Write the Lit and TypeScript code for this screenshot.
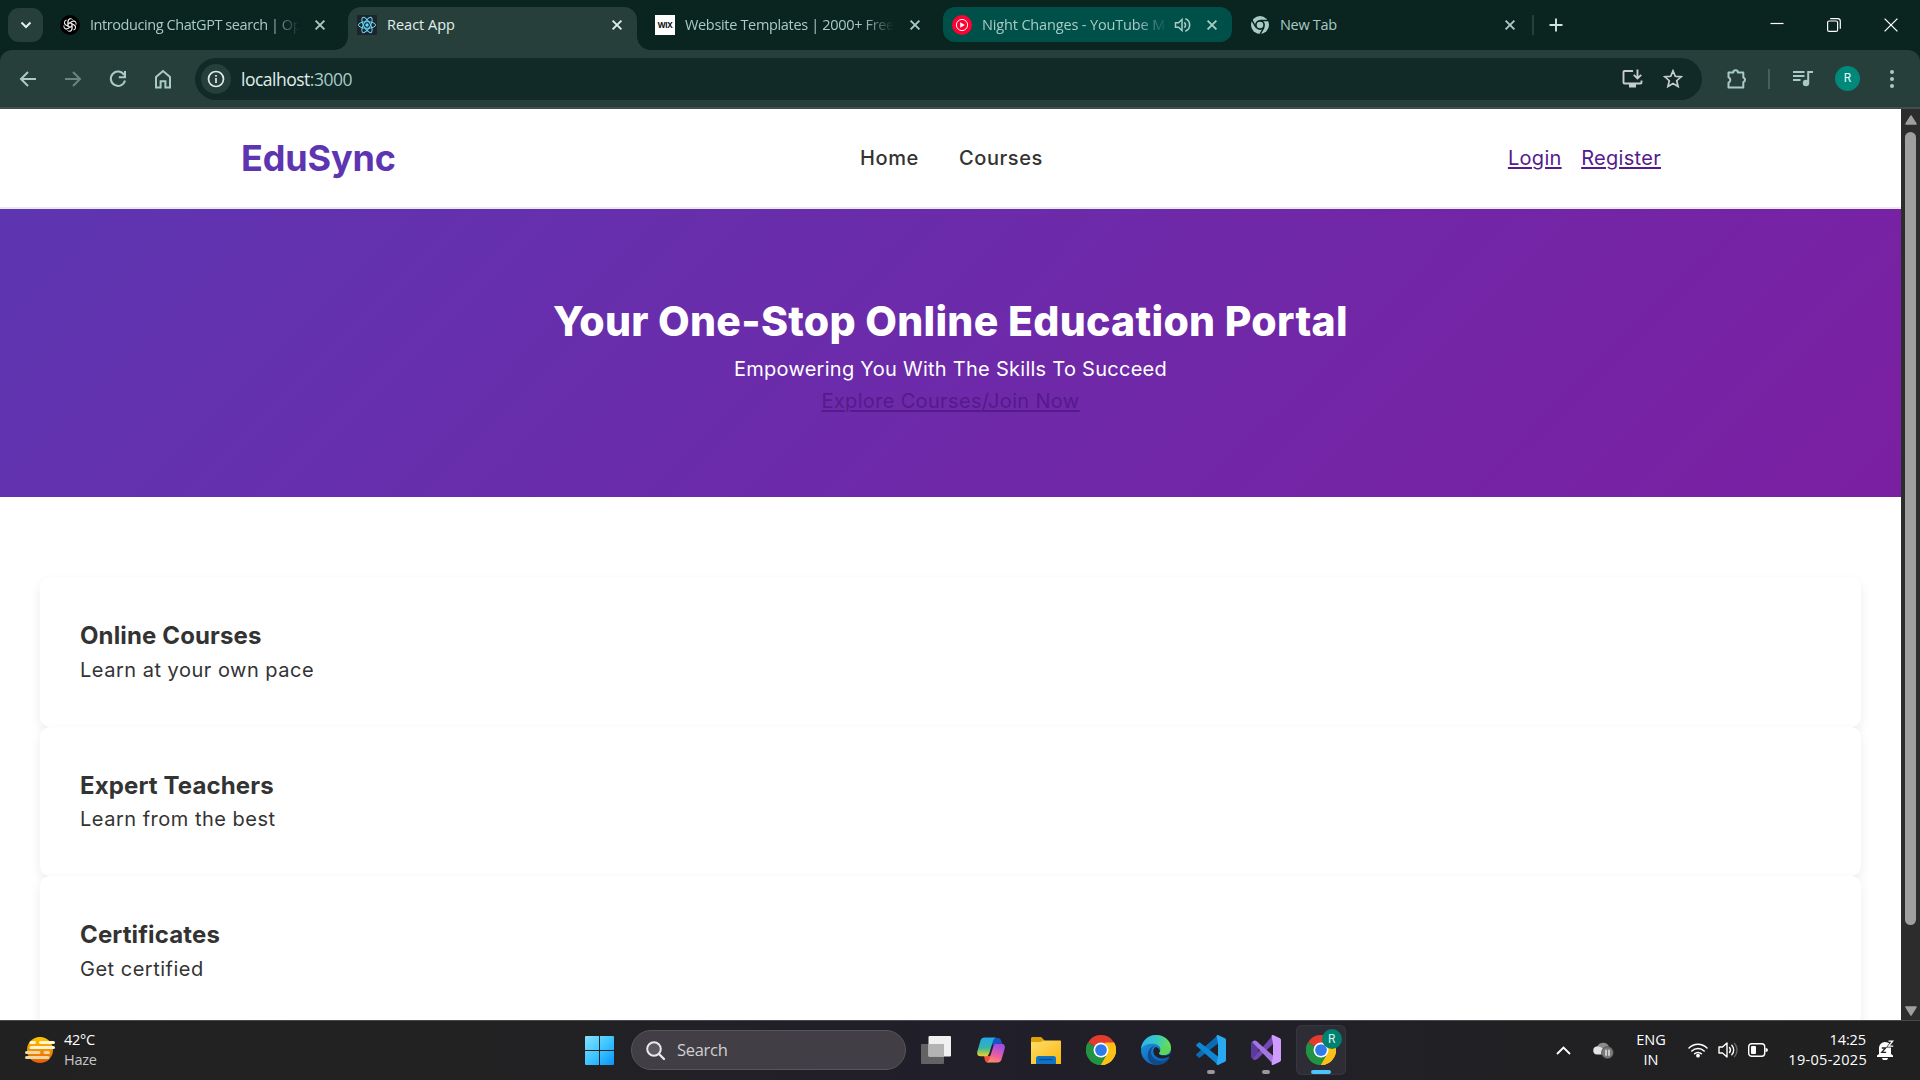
import { LitElement, html, svg, css } from "lit";
import { customElement } from "lit/decorators.js";

const icon = (w: number, h: number, body: unknown, vb = `0 0 ${w} ${h}`) =>
  html`<svg class="icon" width=${w} height=${h} viewBox=${vb} fill="none">${body}</svg>`;

const closeX = icon(12, 12, svg`<path d="M1.6 1.6l8.8 8.8M10.4 1.6l-8.8 8.8" stroke="currentColor" stroke-width="1.9"/>`);

const openai = icon(20, 20, svg`<circle cx="10" cy="10" r="10" fill="#000"/>
  <g stroke="#e8e8e8" stroke-width=".95" stroke-linejoin="round">
  ${[0, 60, 120, 180, 240, 300].map((a) => svg`<path transform="rotate(${a} 10 10)" d="M8 11.2V6.2a2.6 2.6 0 0 1 4.6-1.6M8.1 8.8l4.2-2.4a2.6 2.6 0 0 1 3.3.7"/>`)}
  </g>`);

const react = icon(20, 20, svg`<rect width="20" height="20" rx="1" fill="#20232a"/>
  <g stroke="#61dafb" stroke-width="1"><ellipse cx="10" cy="10" rx="8.6" ry="3.3"/>
  <ellipse cx="10" cy="10" rx="8.6" ry="3.3" transform="rotate(60 10 10)"/>
  <ellipse cx="10" cy="10" rx="8.6" ry="3.3" transform="rotate(120 10 10)"/></g><circle cx="10" cy="10" r="1.7" fill="#61dafb"/>`);

const ytMusic = icon(20, 20, svg`<circle cx="10" cy="10" r="10" fill="#ff0033"/><circle cx="10" cy="10" r="5.6" stroke="#fff" stroke-width="1"/>
  <path d="M8.2 7.2v5.6l4.6-2.8z" fill="#fff"/>`);

const chromeMono = icon(18, 18, svg`<circle cx="9" cy="9" r="9" fill="#a9cac5"/><circle cx="9" cy="9" r="4.9" fill="#0a2420"/>
  <circle cx="9" cy="9" r="3.3" fill="#a9cac5"/>
  <path d="M9 4.4h8.4M5 11.3L.9 4.2M13 11.3l-4 7" stroke="#0a2420" stroke-width="1.5"/>`);

const chrome = (s: number) => icon(s, s, svg`
  <path d="M24 24L3.2 12A24 24 0 0 1 44.8 12z" fill="#e33b2e"/>
  <path d="M24 24L44.8 12A24 24 0 0 1 24 48z" fill="#fbc116"/>
  <path d="M24 24V48A24 24 0 0 1 3.2 12z" fill="#229342"/>
  <path d="M24 12h20.8l-3 8H24z" fill="#e33b2e"/>
  <path d="M24 12h20.800a24 24 0 0 1 .9 2L34 20z" fill="#e33b2e"/>
  <path d="M44.800 12H30l6 12-2 6-10 18A24 24 0 0 0 44.800 12z" fill="#fbc116"/>
  <path d="M13.600 30L3.200 12a24 24 0 0 0 20.800 36l9-15.500-9 3.500z" fill="#229342"/>
  <path d="M24 48l10.400-18 3 4-6 13z" fill="#fbc116"/>
  <circle cx="24" cy="24" r="12" fill="#fff"/><circle cx="24" cy="24" r="9.4" fill="#2f7bea"/>`, "0 0 48 48");

const speakerTab = icon(17, 16, svg`<path d="M1.5 5.8h3L8 2.5v11L4.500 10.200h-3z" stroke="currentColor" stroke-width="1.5"/>
  <path d="M10.300 5.300a3.600 3.600 0 0 1 0 5.400M11.300 1.800a6.600 6.600 0 0 1 0 12.400" stroke="currentColor" stroke-width="1.600"/>`);

@customElement("browser-tabs")
class BrowserTabs extends LitElement {
  static styles = css`
    :host { display: block; height: 50px; background: #0a2420; color: #a9cac5; font: 14.5px "Open Sans", sans-serif; }
    .strip { display: flex; height: 50px; padding-left: 8px; box-sizing: border-box; }
    .icon { display: block; flex: none; }
    .down { width: 35px; height: 34px; margin-top: 8px; border-radius: 11px; background: #273f3b; display: grid; place-items: center; color: #e2efed; }
    .tab { height: 35px; margin-top: 7px; box-sizing: border-box; display: flex; align-items: center; padding-left: 9px; border-radius: 12px; }
    .title { flex: none; margin-left: 10px; white-space: nowrap; letter-spacing: -0.42px; line-height: 26px; }
    .fade { mask-image: linear-gradient(to right, #000 calc(100% - 30px), transparent); }
    .t1 { width: 289px; margin-left: 8px; }
    .t1 .title { width: 210px; margin-right: 14px; letter-spacing: -0.43px; }
    .t2 { width: 289px; margin-left: 8px; height: 43px; padding-bottom: 8px; background: #273f3b; color: #e0efec; border-radius: 13px 13px 0 0; position: relative; }
    .t2::before, .t2::after { content: ""; position: absolute; bottom: 0; width: 13px; height: 13px; }
    .t2::before { left: -13px; background: radial-gradient(circle at 0 0, #0a2420 12.5px, #273f3b 13px); }
    .t2::after { right: -13px; background: radial-gradient(circle at 100% 0, #0a2420 12.5px, #273f3b 13px); }
    .t2 .title { width: 216px; margin-left: 10px; margin-right: 8px; letter-spacing: 0; }
    .t3 { width: 289px; margin-left: 9px; }
    .t3 .title { width: 209px; margin-right: 15px; letter-spacing: -0.33px; }
    .wix { width: 20px; height: 20px; background: #fff; color: #111; font: bold 8px/20px "Inter", sans-serif; letter-spacing: -0.5px; text-align: center; }
    .t4 { width: 289px; margin-left: 8px; background: #00504a; }
    .t4 .title { width: 185px; margin-right: 7px; letter-spacing: -0.15px; }
    .t4 .last { margin-left: 15px; }
    .t5 { width: 289px; margin-left: 10px; }
    .t5 .title { width: 214px; margin-left: 11px; margin-right: 10px; letter-spacing: -0.3px; }
    .sep { width: 2px; height: 20px; background: #273f3b; margin: 15px 0 0 1px; }
    .plus { margin: 18px 0 0 15px; }
    .win { display: flex; align-items: center; height: 50px; margin-left: auto; margin-right: 22px; gap: 43px; color: #fff; }
  `;
  render() {
    return html`<div class="strip">
      <div class="down">${icon(12, 8, svg`<path d="M1.500 1.500L6 6l4.500-4.500" stroke="currentColor" stroke-width="2"/>`)}</div>
      <div class="tab t1">${openai}<span class="title fade">Introducing ChatGPT search | Op</span>${closeX}</div>
      <div class="tab t2">${react}<span class="title">React App</span>${closeX}</div>
      <div class="tab t3"><span class="wix">WIX</span><span class="title fade">Website Templates | 2000+ Free</span>${closeX}</div>
      <div class="tab t4">${ytMusic}<span class="title fade">Night Changes - YouTube M</span>${speakerTab}<span class="last">${closeX}</span></div>
      <div class="tab t5">${chromeMono}<span class="title">New Tab</span>${closeX}</div>
      <div class="sep"></div>
      <div class="plus">${icon(14, 14, svg`<path d="M7 .5v13M.5 7h13" stroke="#cfe3df" stroke-width="1.900"/>`)}</div>
      <div class="win">
        ${icon(14, 14, svg`<path d="M.5 5.500h13" stroke="currentColor" stroke-width="1.200"/>`)}
        ${icon(14, 14, svg`<rect x=".6" y="3" width="10" height="10.400" rx="1.500" stroke="currentColor" stroke-width="1.200"/><path d="M3.200.7h7.500a2.600 2.600 0 0 1 2.600 2.600v7.500" stroke="currentColor" stroke-width="1.200"/>`)}
        ${icon(14, 14, svg`<path d="M.6.6l12.800 12.800M13.400.6L.6 13.400" stroke="currentColor" stroke-width="1.300"/>`)}
      </div>
    </div>`;
  }
}

@customElement("browser-toolbar")
class BrowserToolbar extends LitElement {
  static styles = css`
    :host { display: block; height: 59px; background: #0a2420; }
    .bar { height: 59px; box-sizing: border-box; background: #273f3b; border-radius: 12px 12px 0 0; border-bottom: 2px solid #434d4e; display: flex; align-items: center; padding: 0 19px; color: #a9cac5; }
    .icon { display: block; flex: none; }
    .nav { display: flex; gap: 27px; align-items: center; width: 176px; flex: none; }
    .dim { opacity: 0.5; display: flex; }
    .omni { width: 1507px; height: 42px; box-sizing: border-box; flex: none; border-radius: 21px; background: #112927; display: flex; align-items: center; padding: 0 20px 0 6px; }
    .info { width: 30px; height: 30px; border-radius: 50%; background: #273f3b; display: grid; place-items: center; color: #dceae7; }
    .url { margin-left: 10px; font: 17.500px/24px "Open Sans", sans-serif; letter-spacing: -0.5px; color: #e0efec; flex: 1; }
    .port { color: #a9cac5; }
    .omni-icons { display: flex; gap: 20px; align-items: center; color: #c7cdcc; }
    .omni-icons .icon + .icon { margin-right: -1px; }
    .right { display: flex; align-items: center; flex: none; }
    .ext { margin-left: 24px; }
    .sep { width: 2px; height: 20px; background: #45605b; margin-left: 20px; }
    .music { margin-left: 23px; }
    .avatar { width: 25px; height: 25px; margin-left: 22px; border-radius: 50%; background: #00897b; color: #e6fffb; font: 12px/25px "Roboto", sans-serif; text-align: center; }
    .dots { margin-left: 30px; }
  `;
  render() {
    return html`<div class="bar">
      <div class="nav">
        ${icon(18, 18, svg`<path d="M17 9H2.500M9 2L2 9l7 7" stroke="currentColor" stroke-width="2"/>`)}
        <span class="dim">${icon(18, 18, svg`<path d="M1 9h14.500M9 2l7 7-7 7" stroke="currentColor" stroke-width="2"/>`)}</span>
        ${icon(18, 18, svg`<path d="M15.200 5A7.200 7.200 0 1 0 16 10.500" stroke="currentColor" stroke-width="2"/><path d="M16 1v6.200H9.800" stroke="currentColor" stroke-width="2"/>`)}
        ${icon(18, 20, svg`<path d="M2 8l7-6 7 6v10.500h-4.600v-6.300H6.600v6.300H2z" stroke="currentColor" stroke-width="2"/>`)}
      </div>
      <div class="omni">
        <span class="info">${icon(18, 18, svg`<circle cx="9" cy="9" r="7.500" stroke="currentColor" stroke-width="1.700"/><path d="M9 8v5M9 5v1.800" stroke="currentColor" stroke-width="1.700"/>`)}</span>
        <span class="url">localhost<span class="port">:3000</span></span>
        <span class="omni-icons">
          ${icon(21, 19, svg`<path d="M11 2H2.500a1 1 0 0 0-1 1v10.500a1 1 0 0 0 1 1h16a1 1 0 0 0 1-1V11.500" stroke="currentColor" stroke-width="1.900"/><path d="M7 15h7v3.500H7z" fill="currentColor"/><path d="M15.500.5v8.500M11.800 5.800l3.700 3.700 3.700-3.700" stroke="currentColor" stroke-width="1.900"/>`)}
          ${icon(20, 19, svg`<path d="M10 1.800l2.300 5.500 5.900.5-4.500 3.900 1.400 5.800-5.100-3.100-5.100 3.100 1.400-5.800L1.800 7.800l5.900-.5z" stroke="currentColor" stroke-width="1.700"/>`)}
        </span>
      </div>
      <div class="right">
        <span class="ext">${icon(22, 22, svg`<path d="M2.500 4.500h4.800a2.300 2.300 0 0 1 4.600 0h5.400v5a2.400 2.400 0 0 1 0 4.600v5.400H2.500v-4.800a2.900 2.900 0 0 0 0-5.400z" stroke="currentColor" stroke-width="2" stroke-linejoin="round"/>`)}</span>
        <span class="sep"></span>
        <span class="music">${icon(20, 18, svg`<path d="M0 2h11.500M0 6h11.500M0 10h7.500" stroke="currentColor" stroke-width="2"/><circle cx="13" cy="13" r="3.200" fill="currentColor"/><path d="M15.200 13V2H20" stroke="currentColor" stroke-width="2"/>`)}</span>
        <span class="avatar">R</span>
        <span class="dots">${icon(4, 20, svg`<g fill="currentColor"><circle cx="2" cy="3" r="2"/><circle cx="2" cy="10" r="2"/><circle cx="2" cy="17" r="2"/></g>`)}</span>
      </div>
    </div>`;
  }
}

@customElement("edu-page")
class EduPage extends LitElement {
  static styles = css`
    :host { display: flex; height: 911px; overflow: hidden; background: #fff; font: 20px/32px "Inter", sans-serif; color: #333; }
    .page { width: 1901px; flex: none; }
    .head { height: 100px; box-sizing: border-box; padding: 0 240px; display: flex; align-items: center; justify-content: space-between; border-bottom: 2px solid #e6ebee; }
    .logo { width: 299px; padding-left: 1px; font-weight: 700; font-size: 36px; letter-spacing: -0.15px; color: #5e35b1; }
    .menu { display: flex; gap: 40px; padding-left: 2px; font-weight: 500; letter-spacing: 0.6px; }
    .auth { width: 300px; display: flex; justify-content: flex-end; gap: 19.500px; letter-spacing: 0.3px; }
    .link { color: #551a8b; text-decoration: underline; text-underline-offset: 2px; text-decoration-thickness: 2px; }
    .hero { height: 288px; box-sizing: border-box; padding-top: 80px; background: linear-gradient(135deg, #5e35b1, #7b1fa2); color: #fff; text-align: center; }
    .h1 { margin: 0; font-size: 41px; font-weight: 800; line-height: 65px; margin-bottom: -1px; letter-spacing: 0.3px; }
    .sub { margin: 0; letter-spacing: 0.27px; }
    .explore { letter-spacing: 0.34px; }
    .cards { padding: 80px 40px 0; }
    .card { height: 149.500px; box-sizing: border-box; padding: 40px; border-radius: 10px; background: #fff; box-shadow: 0 5px 12px rgba(0, 0, 0, 0.08); }
    .h3 { margin: 0; font-size: 24px; font-weight: 700; line-height: 37px; letter-spacing: 0.13px; }
    .p { margin: -0.300px 0 0; letter-spacing: 0.5px; }
    .scroll { width: 19px; flex: none; background: #2c2c2c; display: flex; flex-direction: column; align-items: center; justify-content: space-between; padding: 6px 0 4px; box-sizing: border-box; }
    .thumb { width: 11px; height: 793px; border-radius: 6px; background: #9f9f9f; margin-bottom: auto; margin-top: 7px; }
    .icon { display: block; }
  `;
  private features = [
    ["Online Courses", "Learn at your own pace"],
    ["Expert Teachers", "Learn from the best"],
    ["Certificates", "Get certified"],
  ];
  render() {
    return html`<div class="page">
        <header class="head">
          <div class="logo">EduSync</div>
          <nav class="menu"><span>Home</span><span>Courses</span></nav>
          <div class="auth"><span class="link">Login</span><span class="link">Register</span></div>
        </header>
        <section class="hero">
          <h1 class="h1">Your One-Stop Online Education Portal</h1>
          <p class="sub">Empowering You With The Skills To Succeed</p>
          <span class="link explore">Explore Courses/Join Now</span>
        </section>
        <section class="cards">
          ${this.features.map(([t, d]) => html`<article class="card"><h3 class="h3">${t}</h3><p class="p">${d}</p></article>`)}
        </section>
      </div>
      <div class="scroll">
        ${icon(12, 10, svg`<path d="M6 1l5 8H1z" fill="#9f9f9f" stroke="#9f9f9f" stroke-width="1.500" stroke-linejoin="round"/>`)}
        <div class="thumb"></div>
        ${icon(12, 10, svg`<path d="M6 9L1 1h10z" fill="#9f9f9f" stroke="#9f9f9f" stroke-width="1.500" stroke-linejoin="round"/>`)}
      </div>`;
  }
}

@customElement("task-bar")
class TaskBar extends LitElement {
  static styles = css`
    :host { display: block; height: 60px; box-sizing: border-box; border-top: 1px solid #46484a; background: linear-gradient(to right, #212121, #222223 25%, #201f2a 50%, #212124 80%, #202020); color: #fff; font: 14.500px/20px "Open Sans", sans-serif; letter-spacing: -0.3px; }
    .bar { display: flex; height: 58px; align-items: center; }
    .icon { display: block; flex: none; }
    .weather { display: flex; width: 585px; flex: none; box-sizing: border-box; padding-left: 25px; gap: 9px; align-items: center; }
    .text { margin-top: -1px; }
    .haze { color: #c6c6c6; }
    .search { width: 275px; height: 40px; margin-left: 17px; box-sizing: border-box; border-radius: 20px; border: 1px solid #56555a; background: #413f45; display: flex; align-items: center; padding-left: 14px; gap: 12px; font-size: 16.500px; color: #d0cfd2; }
    .apps { display: flex; margin-left: 4.500px; gap: 5px; }
    .app { width: 50px; height: 50px; border-radius: 6px; display: grid; place-items: center; position: relative; }
    .on { background: #2e2d35; box-shadow: inset 0 0 0 1px #38373f; }
    .run::after { content: ""; position: absolute; left: 21px; bottom: 1px; width: 8px; height: 4px; border-radius: 2px; background: #98979b; }
    .on::after { left: 15px; width: 20px; background: #4cc2ff; }
    .badge { position: absolute; left: 26px; top: 4px; width: 20px; height: 20px; border-radius: 50%; background: #00806f; color: #d8f5f0; font: 12px/20px "Roboto", sans-serif; text-align: center; }
    .tray { display: flex; align-items: center; margin-left: auto; padding-right: 26px; }
    .cloud { margin-left: 22px; }
    .lang { margin-left: 22px; text-align: center; width: 30px; letter-spacing: 0; }
    .wifi { margin-left: 22px; }
    .vol { margin-left: 10px; }
    .bat { margin-left: 10px; }
    .clock { margin-left: 19px; width: 80px; text-align: right; letter-spacing: 0.3px; }
    .time { letter-spacing: -0.1px; margin-right: 1px; }
    .bell { margin-left: 10px; }
  `;
  render() {
    return html`<div class="bar">
      <div class="weather">
        ${icon(30, 26, svg`<defs><linearGradient id="sun" x1="0" y1="0" x2="0" y2="1"><stop stop-color="#fdc800"/><stop offset="1" stop-color="#e9590c"/></linearGradient></defs>
          <circle cx="15" cy="13" r="13" fill="url(#sun)"/>
          <g stroke-width="3" stroke-linecap="round"><path d="M6 5.500h3.500M15.500 5.500h13M6 10.500h22.500" stroke="#fff3d0"/><path d="M1.500 15.500H14M20 15.500h3.500M1.500 20.500H23" stroke="#ead9a0"/></g>`)}
        <div class="text"><div>42°C</div><div class="haze">Haze</div></div>
      </div>
      ${icon(29, 29, svg`<defs><linearGradient id="win" x1="0" y1="0" x2="1" y2="1"><stop stop-color="#86e0ff"/><stop offset=".5" stop-color="#3ec6ff"/><stop offset="1" stop-color="#0a93fa"/></linearGradient></defs>
        <path d="M1 0h13v14H0V1a1 1 0 0 1 1-1zM15 0h13a1 1 0 0 1 1 1v13H15zM0 15h14v14H1a1 1 0 0 1-1-1zM15 15h14v13a1 1 0 0 1-1 1H15z" fill="url(#win)"/>`)}
      <div class="search">${icon(19, 19, svg`<circle cx="8" cy="8" r="6.800" fill="#5c5a61" stroke="#e9e9eb" stroke-width="2"/><path d="M13 13l5 5" stroke="#e9e9eb" stroke-width="2.400" stroke-linecap="round"/>`)}<span>Search</span></div>
      <div class="apps">
        <div class="app">${icon(30, 28, svg`<rect y="8" width="23" height="20" rx="1" fill="#636365"/><rect x="7.500" y="0" width="22.500" height="20.500" rx="1" fill="#f0f0f0"/><path d="M7.500 8H23v12.500H7.500z" fill="#b4b4b5"/>`)}</div>
        <div class="app">${icon(28, 26, svg`<defs>
          <linearGradient id="c1" x1="0" y1="0" x2="0" y2="1"><stop stop-color="#22a7f0"/><stop offset=".55" stop-color="#35b7a5"/><stop offset="1" stop-color="#f0d321"/></linearGradient>
          <linearGradient id="c2" x1="0.300" y1="0" x2="0" y2="1"><stop stop-color="#a24de8"/><stop offset=".55" stop-color="#ef5f9b"/><stop offset="1" stop-color="#fda05a"/></linearGradient></defs>
          <path d="M17 1h4q2.500 0 3.300 3l.8 2.500H21q-2.500 0-3.500 3L15 7z" fill="#1556c9"/>
          <path d="M7 19l6 0 3-3-3 8q-.6 1.500-2.500 1.500-1.800 0-2.500-2z" fill="#f2503b"/>
          <path d="M7.500.5H19q-2 .5-2.800 3l-4 13q-.8 2.800-3.500 2.800H3.500Q-.5 19 .3 14.500L3.500 3.500Q4.500.5 7.500.5z" fill="url(#c1)"/>
          <path d="M20.500 25.500H9.500q2-.5 2.800-3l4-13q.8-2.800 3.500-2.800h4.700q4 .3 3.200 4.800l-3.200 11q-1 3-4 3z" fill="url(#c2)"/>`)}</div>
        <div class="app">${icon(30, 27, svg`<defs><linearGradient id="f" x1="0" y1="0" x2="1" y2="1"><stop stop-color="#ffdd6b"/><stop offset="1" stop-color="#fbb70e"/></linearGradient></defs>
          <path d="M0 1.500A1.500 1.500 0 0 1 1.500 0h8.600l3 3v5H0z" fill="#e0a106"/><path d="M0 5h10l2.500-1.500H29a1 1 0 0 1 1 1V27H0z" fill="url(#f)"/>
          <path d="M5 27v-5.500A2.500 2.500 0 0 1 7.500 19h15a2.500 2.500 0 0 1 2.500 2.500V27z" fill="#0f74c4"/><path d="M8.500 22.500h13" stroke="#0a4a8a" stroke-width="1.300"/>`)}</div>
        <div class="app">${chrome(30)}</div>
        <div class="app">${icon(30, 30, svg`<defs><linearGradient id="e1" x1="0" y1="0.300" x2="1" y2="0.400"><stop stop-color="#2fb4ee"/><stop offset=".5" stop-color="#35c9c4"/><stop offset="1" stop-color="#6ce04b"/></linearGradient>
          <linearGradient id="e2" x1="0" y1="0" x2="0.600" y2="1"><stop stop-color="#1f9de0"/><stop offset="1" stop-color="#0b5fb5"/></linearGradient></defs>
          <circle cx="15" cy="15" r="15" fill="url(#e2)"/>
          <path d="M.1 13.500C1 5.500 7.500 0 15 0c8.500 0 15 6 15 12.500 0 5-3.500 7.500-7.500 7.500-3 0-5-1-4-2.500 2-2.500 1-7.500-4.500-8.500C8.500 8 3 9 .1 13.500z" fill="url(#e1)"/>
          <path d="M13.500 11c-5 3-4.500 10 1 13.500 4.500 2.700 9.500 2 12.700-.7l1.300-.8C26 27.500 21.500 30 16 30 9 29.500 6 24 7 18.500c.7-4 3.500-7 6.500-7.500z" fill="#114a8b"/>
          <path d="M14.500 12c-3.500 2.500-2.500 7 .5 9.500 4 2.800 9 2.200 13 0l2 1V18c-2 2-4.500 2.500-7.500 2.500s-5-1-4-2.500c1-1.500 .5-5-4-6z" fill="#201f2a"/>
          <path d="M19 11c2 2 1 5-.5 6.500-1 1.500 1 2.500 4 2.500 4 0 7.500-2.500 7.500-7.500z" fill="#5bd85c"/>`)}</div>
        <div class="app run">${icon(30, 30, svg`<path d="M22 0v8.500L4 22.500a1 1 0 0 1-1.300 0L.5 20.500a1 1 0 0 1 0-1.500z" fill="#0a6cb4"/>
          <path d="M22 30v-8.500L4 7.500a1 1 0 0 0-1.300 0L.5 9.500a1 1 0 0 0 0 1.500z" fill="#0f86d2"/>
          <path d="M22 0l7 3.300q1 .5 1 1.700v20q0 1.200-1 1.700L22 30q-1 .2-1.500-.8L22 21.500v-13L20.500.8Q21-.2 22 0z" fill="#2aa8f2"/>`)}</div>
        <div class="app run">${icon(30, 30, svg`<path d="M0 7.500L4 5l3.500 2.500V22L4 25l-4-2.500z" fill="#5b3a9b"/>
          <path d="M22 0v9L7 23.500Q4 26 1.500 24L4 21z" fill="#7348b5"/><path d="M1.200 7Q3.500 4.500 6.500 7L23 21.500V30L4 10q-2-2-2.800-3z" fill="#a476e0"/>
          <path d="M22 0l7 3.300q1 .5 1 1.700v20q0 1.200-1 1.700L22 30q-1 .2-1.500-.8L22 21.500v-13L20.500.8Q21-.2 22 0z" fill="#cf9bff"/>`)}</div>
        <div class="app run on">${chrome(30)}<span class="badge">R</span></div>
      </div>
      <div class="tray">
        ${icon(15, 9, svg`<path d="M1 8l6.500-6.500L14 8" stroke="#fff" stroke-width="1.800"/>`)}
        <span class="cloud">${icon(21, 18, svg`<path d="M4.500 13a4.300 4.300 0 0 1 0-8A6.500 6.500 0 0 1 16 5.500 4 4 0 0 1 17 13z" fill="#8c8c8c"/><path d="M4 13.500A4 4 0 0 1 4.500 5.500Q8 5 11 9l2 4.500z" fill="#e3e3e3"/><circle cx="14.500" cy="11.700" r="6" fill="#7a7a7a" stroke="#333" stroke-width=".6"/><path d="M13 8.700v6M16 8.700v6" stroke="#fff" stroke-width="1.200"/>`)}</span>
        <div class="lang">ENG<br>IN</div>
        <span class="wifi">${icon(20, 16, svg`<g stroke="#fff" stroke-width="1.500" stroke-linecap="round"><path d="M1 6a12.700 12.700 0 0 1 18 0M3.800 9a8.800 8.800 0 0 1 12.400 0M6.600 11.800a4.800 4.800 0 0 1 6.800 0"/></g><circle cx="10" cy="13.700" r="1.900" fill="#fff"/>`)}</span>
        <span class="vol">${icon(20, 18, svg`<path d="M1 6h3.500L9 2v14l-4.500-4H1z" stroke="#fff" stroke-width="1.400" stroke-linejoin="round"/><path d="M11.500 6.500a4 4 0 0 1 0 5M13.800 4.200a7 7 0 0 1 0 9.600" stroke="#fff" stroke-width="1.400" stroke-linecap="round"/><path d="M16.200 2a10 10 0 0 1 0 14" stroke="#666" stroke-width="1.400"/>`)}</span>
        <span class="bat">${icon(20, 14, svg`<rect x=".7" y=".7" width="16" height="12.600" rx="3" stroke="#fff" stroke-width="1.400"/><rect x="3" y="3" width="5" height="8" rx="1" fill="#fff"/><path d="M17.500 5q2.500 0 2.500 2t-2.500 2z" fill="#fff"/>`)}</span>
        <div class="clock text"><span class="time">14:25</span><br>19-05-2025</div>
        <span class="bell">${icon(17, 20, svg`<path d="M2 14V8a6 6 0 0 1 6-6q6 0 6 6v6l2 1.500V17H0v-1.500z" fill="#fff"/><path d="M5 18h6a3 2.200 0 0 1-6 0z" fill="#fff"/><path d="M4.800 8h3.800l-3.800 4.300h4.400" stroke="#202020" stroke-width="1.300"/><path d="M11.500 1.200h4.200l-4 5h4.500" stroke="#202020" stroke-width="2.600"/><path d="M11.500 1.200h4.200l-4 5h4.500" stroke="#fff" stroke-width="1.300"/>`)}</span>
      </div>
    </div>`;
  }
}

@customElement("app-root")
class AppRoot extends LitElement {
  static styles = css`
    :host { display: block; width: 1920px; height: 1080px; overflow: hidden; }
  `;
  render() {
    return html`<browser-tabs></browser-tabs><browser-toolbar></browser-toolbar><edu-page></edu-page><task-bar></task-bar>`;
  }
}
